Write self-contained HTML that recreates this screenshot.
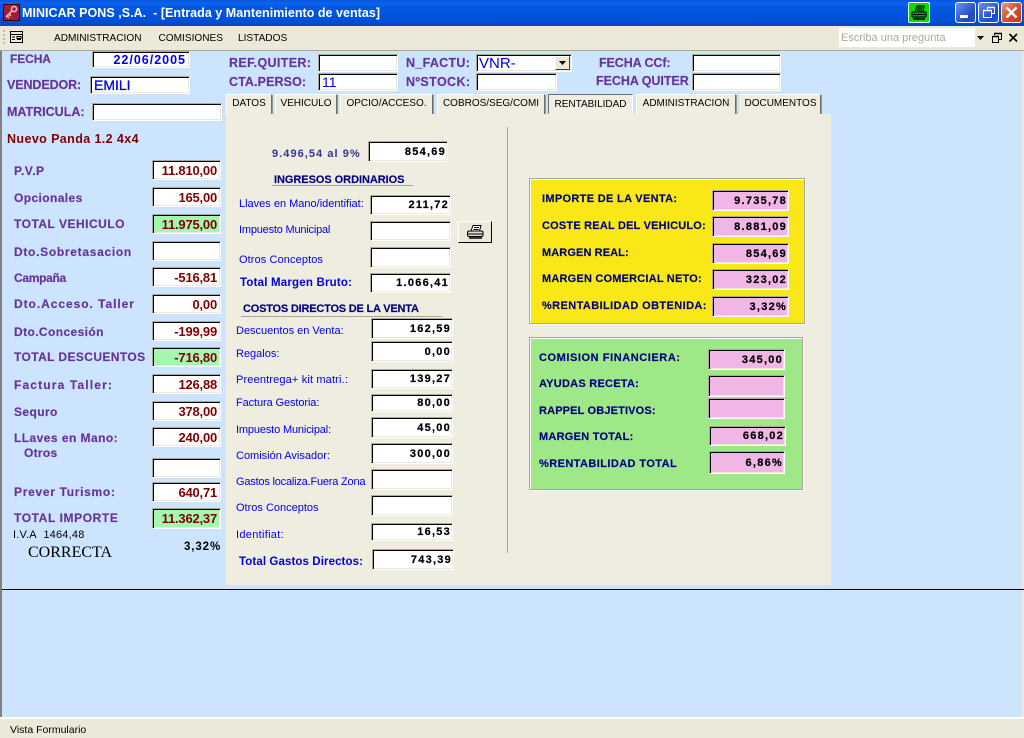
<!DOCTYPE html>
<html><head><meta charset="utf-8"><style>
html,body{margin:0;padding:0}
body{width:1024px;height:738px;overflow:hidden;position:relative;background:#cde4ff;font-family:"Liberation Sans",sans-serif}
div,svg{position:absolute}
.l{height:16px;line-height:16px;white-space:nowrap}
.p{color:#663399;font-weight:bold;font-size:12px;letter-spacing:.7px;-webkit-text-stroke:.15px #663399}
.b{color:#0000ee;font-size:11px}
.bb{color:#0000dd;font-size:11.5px;font-weight:bold}
.n{color:#000080;font-weight:bold;font-size:11px;letter-spacing:.32px;-webkit-text-stroke:.15px #000080}
.f{box-sizing:border-box;background:#fff;border:1px solid;border-color:#aca899 #fff #fff #aca899;box-shadow:inset 1px 1px 0 #000,inset -1px -1px 0 #ece9d8;display:flex;align-items:center;justify-content:flex-end;padding-right:3px;font-weight:bold;white-space:nowrap}
.r{color:#800000;font-size:13px;letter-spacing:-.2px}
.g{background:#a3f7b0}
.k{color:#000;font-size:11px;letter-spacing:1.25px;padding-right:1px;-webkit-text-stroke:.2px #000}
.m{background:#efb6e6}
.t{box-sizing:border-box;top:94px;height:21px;background:#eeeddf;border:1px solid;border-color:#fff #716f64 #716f64 #fff;box-shadow:1px 1px 0 #9d9a8b;font-size:10px;text-align:center;line-height:18px;color:#000;white-space:nowrap}
.w{font-size:10.1px;color:#000;white-space:nowrap}
</style></head><body>
<!-- title bar -->
<div style="left:0;top:0;width:1024px;height:26px;background:linear-gradient(#0a55d8 0,#0a62f0 3px,#0458e0 8px,#0050d8 20px,#0148c0 26px)"></div>
<div style="left:3px;top:4px;width:15px;height:15px;background:#9c1c3c;border:1px solid #400"></div>
<svg style="left:4px;top:5px" width="14" height="14" viewBox="0 0 14 14"><circle cx="10" cy="4" r="2.6" fill="none" stroke="#f3b0b0" stroke-width="1.6"/><path d="M8 6 L2 12 M3 11 L5 13 M5 9 L7 11" stroke="#f3b0b0" stroke-width="1.6" fill="none"/></svg>
<div class="l" style="left:22px;top:5px;color:#fff;font-weight:bold;font-size:12.5px;letter-spacing:.03px">MINICAR PONS ,S.A.&nbsp; - [Entrada y Mantenimiento de ventas]</div>
<div style="left:908px;top:2px;width:22px;height:21px;box-sizing:border-box;background:#00e000;border:1px solid #fff;border-radius:2px"></div>
<svg style="left:910px;top:4px" width="18" height="17" viewBox="0 0 18 17" fill="none" stroke="#000" stroke-width="1.3"><path d="M5 8 L7 2 H14 L13 8"/><path d="M7.5 4 H12.5 M7 6 H12"/><rect x="2" y="8" width="14" height="5" rx="1"/><path d="M3 15 H15 M3 10.5 H15" stroke-width="1.5"/></svg>
<div style="left:955px;top:2px;width:21px;height:21px;box-sizing:border-box;background:linear-gradient(135deg,#6d92ee,#1f48c8 70%,#2a55d8);border:1px solid #fff;border-radius:3px"></div>
<div style="left:960px;top:15px;width:8px;height:3px;background:#fff"></div>
<div style="left:978px;top:2px;width:21px;height:21px;box-sizing:border-box;background:linear-gradient(135deg,#6d92ee,#1f48c8 70%,#2a55d8);border:1px solid #fff;border-radius:3px"></div>
<svg style="left:982px;top:6px" width="14" height="13" fill="none" stroke="#fff"><path d="M5.5 3.5 V1.5 H12.5 V7.5 H10" stroke-width="1"/><rect x="1.5" y="4.5" width="8" height="7"/><path d="M5 1.5 H13 M1 4.5 H10" stroke-width="1.6"/></svg>
<div style="left:1001px;top:2px;width:21px;height:21px;box-sizing:border-box;background:linear-gradient(135deg,#eb9a80,#d8502c 50%,#c23a1c);border:1px solid #fff;border-radius:3px"></div>
<svg style="left:1004px;top:5px" width="15" height="15" stroke="#fff" stroke-width="2.4"><path d="M2.5 2.5 L12.5 12.5 M12.5 2.5 L2.5 12.5"/></svg>
<!-- menu bar -->
<div style="left:0;top:26px;width:1024px;height:24px;background:#ece9d8"></div>
<div style="left:0;top:50px;width:1024px;height:1px;background:#aca899"></div>
<div style="left:3px;top:30px;width:2px;height:14px;background:repeating-linear-gradient(#c1bdaa 0 2px,transparent 2px 4px)"></div>
<svg style="left:10px;top:31px" width="13" height="12" fill="none" stroke="#000"><rect x=".5" y=".5" width="12" height="11"/><path d="M.5 3.5 H12.5 M2 6 H5 M2 8.5 H5 M7 5.5 H11 V7.5 H7 Z M7 8.5 H11"/></svg>
<div class="l w" style="left:54px;top:31px">ADMINISTRACION</div>
<div class="l w" style="left:158.5px;top:31px">COMISIONES</div>
<div class="l w" style="left:238px;top:31px">LISTADOS</div>
<div style="left:839px;top:28px;width:147px;height:19px;background:#fff"></div>
<div class="l" style="left:841px;top:30px;font-size:11px;color:#aca899">Escriba una pregunta</div>
<div style="left:975px;top:28px;width:11px;height:19px;background:#ece9d8"></div>
<svg style="left:977px;top:36px" width="8" height="4"><path d="M0 0 H7 L3.5 4 Z" fill="#000"/></svg>
<svg style="left:991px;top:32px" width="12" height="12" fill="none" stroke="#000"><path d="M3.5 3 V1.5 H10.5 V7.5 H8"/><rect x="1.5" y="4.5" width="6" height="6"/><path d="M1 4.5 H8 M3 1.5 H11" stroke-width="1.5"/></svg>
<svg style="left:1008px;top:33px" width="11" height="10" stroke="#000" stroke-width="1.6"><path d="M1.5 1 L9 8.5 M9 1 L1.5 8.5"/></svg>
<!-- form frame -->
<div style="left:0;top:51px;width:2px;height:666px;background:#808080"></div>
<div style="left:1022px;top:51px;width:2px;height:666px;background:#ece9d8"></div>
<div style="left:2px;top:589px;width:1022px;height:1px;background:#000"></div>
<div style="left:0;top:717px;width:1024px;height:21px;background:#ece9d8;border-top:2px solid #fff;box-sizing:border-box"></div>
<div class="l" style="left:10px;top:722px;font-size:10.5px;color:#000">Vista Formulario</div>
<!-- header fields -->
<div class="l p" style="left:10px;top:51px;letter-spacing:-.1px">FECHA</div>
<div class="f" style="left:92px;top:51px;width:98px;height:17px;color:#0000ee;font-size:12.5px;letter-spacing:1px">22/06/2005</div>
<div class="l p" style="left:7px;top:77px;font-size:12.5px;letter-spacing:-.1px">VENDEDOR:</div>
<div class="f" style="left:90px;top:76px;width:100px;height:18px;color:#0000ee;font-size:14px;font-weight:normal;justify-content:flex-start;padding-left:3px;-webkit-text-stroke:.3px #0000ee">EMILI</div>
<div class="l p" style="left:7px;top:104px;font-size:12.5px;letter-spacing:0">MATRICULA:</div>
<div class="f" style="left:92px;top:103px;width:130px;height:18px"></div>
<div class="l p" style="left:229px;top:55px;font-size:12.5px;letter-spacing:.35px">REF.QUITER:</div>
<div class="f" style="left:318px;top:54px;width:80px;height:18px"></div>
<div class="l p" style="left:229px;top:74px;font-size:12.5px;letter-spacing:.1px">CTA.PERSO:</div>
<div class="f" style="left:318px;top:73px;width:80px;height:18px;color:#0000ee;font-size:14px;font-weight:normal;justify-content:flex-start;padding-left:3px">11</div>
<div class="l p" style="left:406px;top:55px;font-size:12.5px;letter-spacing:.3px">N_FACTU:</div>
<div class="f" style="left:476px;top:54px;width:96px;height:18px;color:#0000ee;font-size:15px;font-weight:normal;justify-content:flex-start;padding-left:2px">VNR-</div>
<div style="left:555px;top:56px;width:15px;height:14px;box-sizing:border-box;background:#ece9d8;border:1px solid;border-color:#fff #404040 #404040 #fff"></div>
<svg style="left:559px;top:61px" width="7" height="4"><path d="M0 0 H7 L3.5 4 Z" fill="#000"/></svg>
<div class="l p" style="left:406px;top:74px;font-size:12.5px;letter-spacing:.4px">NºSTOCK:</div>
<div class="f" style="left:476px;top:73px;width:81px;height:18px"></div>
<div class="l p" style="left:599px;top:55px;font-size:12.5px;letter-spacing:-.1px">FECHA CCf:</div>
<div class="f" style="left:692px;top:54px;width:89px;height:18px"></div>
<div class="l p" style="left:596px;top:73px;font-size:12.5px;letter-spacing:-.05px">FECHA QUITER</div>
<div class="f" style="left:692px;top:73px;width:89px;height:18px"></div>
<div class="l" style="left:7px;top:131px;color:#800000;font-weight:bold;font-size:12.5px;letter-spacing:.4px">Nuevo Panda 1.2 4x4</div>
<!-- left column -->
<div class="l p" style="left:14px;top:163px;letter-spacing:.5px">P.V.P</div><div class="f r" style="left:152px;top:160px;width:69px;height:20px">11.810,00</div>
<div class="l p" style="left:14px;top:190px;letter-spacing:.4px">Opcionales</div><div class="f r" style="left:152px;top:187px;width:69px;height:20px">165,00</div>
<div class="l p" style="left:14px;top:216px;letter-spacing:.5px">TOTAL VEHICULO</div><div class="f r g" style="left:152px;top:214px;width:69px;height:20px">11.975,00</div>
<div class="l p" style="left:14px;top:244px">Dto.Sobretasacion</div><div class="f r" style="left:152px;top:241px;width:69px;height:20px"></div>
<div class="l p" style="left:14px;top:270px;letter-spacing:-.3px">Campaña</div><div class="f r" style="left:152px;top:267px;width:69px;height:20px">-516,81</div>
<div class="l p" style="left:14px;top:296px;letter-spacing:.95px">Dto.Acceso. Taller</div><div class="f r" style="left:152px;top:294px;width:69px;height:20px">0,00</div>
<div class="l p" style="left:14px;top:324px;letter-spacing:.4px">Dto.Concesión</div><div class="f r" style="left:152px;top:321px;width:69px;height:20px">-199,99</div>
<div class="l p" style="left:14px;top:349px;letter-spacing:.4px">TOTAL DESCUENTOS</div><div class="f r g" style="left:152px;top:347px;width:69px;height:20px">-716,80</div>
<div class="l p" style="left:14px;top:377px;letter-spacing:1.15px">Factura Taller:</div><div class="f r" style="left:152px;top:374px;width:69px;height:20px">126,88</div>
<div class="l p" style="left:14px;top:404px;letter-spacing:.4px">Sequro</div><div class="f r" style="left:152px;top:401px;width:69px;height:20px">378,00</div>
<div class="l p" style="left:14px;top:430px;letter-spacing:.45px">LLaves en Mano:</div><div class="f r" style="left:152px;top:427px;width:69px;height:20px">240,00</div>
<div class="l p" style="left:24px;top:445px;letter-spacing:.3px">Otros</div><div class="f r" style="left:152px;top:458px;width:69px;height:20px"></div>
<div class="l p" style="left:14px;top:484px">Prever Turismo:</div><div class="f r" style="left:152px;top:482px;width:69px;height:20px">640,71</div>
<div class="l p" style="left:14px;top:510px;letter-spacing:.6px">TOTAL IMPORTE</div><div class="f r g" style="left:152px;top:508px;width:69px;height:21px">11.362,37</div>
<div class="l" style="left:13px;top:527px;font-size:11px;letter-spacing:.2px;color:#000">I.V.A&nbsp; 1464,48</div>
<div class="l" style="left:28px;top:545px;font-family:'Liberation Serif',serif;font-size:16px;color:#000">CORRECTA</div>
<div class="l" style="left:184px;top:539px;font-size:11.5px;font-weight:bold;color:#000;letter-spacing:.9px">3,32%</div>
<!-- tabs -->
<div class="t" style="left:226px;width:46px">DATOS</div>
<div class="t" style="left:275px;width:62px">VEHICULO</div>
<div class="t" style="left:340px;width:93px">OPCIO/ACCESO.</div>
<div class="t" style="left:437px;width:108px">COBROS/SEG/COMI</div>
<div class="t" style="left:636px;width:100px">ADMINISTRACION</div>
<div class="t" style="left:740px;width:81px">DOCUMENTOS</div>
<div style="left:226px;top:114px;width:605px;height:471px;background:#eeeddf"></div>
<div class="t" style="left:548px;width:85px;height:20px;border-color:#716f64 #fff #eeeddf #716f64;box-shadow:none;line-height:20px;background:repeating-conic-gradient(#ece9d8 0 25%,#f6f4ec 0 50%) 0 0/2px 2px">RENTABILIDAD</div>
<div style="left:507px;top:127px;width:1px;height:426px;background:#a8a699"></div>
<!-- middle column -->
<div class="l" style="left:272px;top:146px;color:#333399;font-weight:bold;font-size:11px;letter-spacing:1.05px">9.496,54 al 9%</div>
<div class="f k" style="left:368px;top:141px;width:80px;height:21px">854,69</div>
<div class="l n" style="left:274px;top:172px;letter-spacing:-.05px">INGRESOS ORDINARIOS</div>
<div style="left:272px;top:185px;width:141px;height:1px;background:#a8a699"></div>
<div class="l b" style="left:239px;top:196px">Llaves en Mano/identifiat:</div><div class="f k" style="left:370px;top:195px;width:81px;height:20px">211,72</div>
<div class="l b" style="left:239px;top:222px;letter-spacing:-.2px">Impuesto Municipal</div><div class="f k" style="left:370px;top:221px;width:81px;height:20px"></div>
<div class="l b" style="left:239px;top:252px;letter-spacing:.1px">Otros Conceptos</div><div class="f k" style="left:370px;top:247px;width:81px;height:21px"></div>
<div class="l bb" style="left:240px;top:275px;letter-spacing:.2px">Total Margen Bruto:</div><div class="f k" style="left:370px;top:273px;width:81px;height:20px">1.066,41</div>
<div style="left:458px;top:221px;width:34px;height:22px;box-sizing:border-box;background:#ece9d8;border:1px solid;border-color:#fff #000 #000 #fff"></div>
<svg style="left:467px;top:224px" width="17" height="16" viewBox="0 0 17 16" fill="none" stroke="#000"><path d="M4 7 L6 1.5 H14 L12.5 7" fill="#fff"/><path d="M7 3.5 H12 M6.5 5.5 H11.5"/><rect x=".5" y="7" width="15.5" height="5.5" rx="1.5" fill="#ddd"/><path d="M1 10 H16" /><path d="M2 14 H15" stroke-width="1.5"/></svg>
<div class="l n" style="left:243px;top:301px;letter-spacing:-.2px">COSTOS DIRECTOS DE LA VENTA</div>
<div style="left:241px;top:316px;width:201px;height:1px;background:#a8a699"></div>
<div class="l b" style="left:236px;top:323px">Descuentos en Venta:</div><div class="f k" style="left:371px;top:318px;width:82px;height:21px">162,59</div>
<div class="l b" style="left:236px;top:346px">Regalos:</div><div class="f k" style="left:371px;top:341px;width:82px;height:21px">0,00</div>
<div class="l b" style="left:236px;top:372px;letter-spacing:.15px">Preentrega+ kit matri.:</div><div class="f k" style="left:371px;top:369px;width:82px;height:20px">139,27</div>
<div class="l b" style="left:236px;top:395px;letter-spacing:-.1px">Factura Gestoria:</div><div class="f k" style="left:371px;top:394px;width:82px;height:18px">80,00</div>
<div class="l b" style="left:236px;top:422px;letter-spacing:-.15px">Impuesto Municipal:</div><div class="f k" style="left:371px;top:417px;width:82px;height:21px">45,00</div>
<div class="l b" style="left:236px;top:448px">Comisión Avisador:</div><div class="f k" style="left:371px;top:443px;width:82px;height:21px">300,00</div>
<div class="l b" style="left:236px;top:474px;letter-spacing:-.2px">Gastos localiza.Fuera Zona</div><div class="f k" style="left:371px;top:469px;width:82px;height:21px"></div>
<div class="l b" style="left:236px;top:500px">Otros Conceptos</div><div class="f k" style="left:371px;top:495px;width:82px;height:21px"></div>
<div class="l b" style="left:236px;top:527px;letter-spacing:.3px">Identifiat:</div><div class="f k" style="left:371px;top:523px;width:82px;height:18px">16,53</div>
<div class="l bb" style="left:239px;top:554px;letter-spacing:.1px">Total Gastos Directos:</div><div class="f k" style="left:372px;top:549px;width:82px;height:21px">743,39</div>
<!-- yellow -->
<div style="left:529px;top:178px;width:277px;height:147px;box-sizing:border-box;background:#f9e816;border:1px solid;border-color:#aca899 #fff #fff #aca899;box-shadow:inset -1px -1px 0 #aca899,inset 1px 1px 0 #fff"></div>
<div class="l n" style="left:542px;top:191px">IMPORTE DE LA VENTA:</div><div class="f k m" style="left:712px;top:190px;width:77px;height:21px">9.735,78</div>
<div class="l n" style="left:542px;top:218px;letter-spacing:.2px">COSTE REAL DEL VEHICULO:</div><div class="f k m" style="left:712px;top:216px;width:77px;height:21px">8.881,09</div>
<div class="l n" style="left:542px;top:245px;letter-spacing:.1px">MARGEN REAL:</div><div class="f k m" style="left:712px;top:243px;width:77px;height:21px">854,69</div>
<div class="l n" style="left:542px;top:271px;letter-spacing:.2px">MARGEN COMERCIAL NETO:</div><div class="f k m" style="left:712px;top:269px;width:77px;height:21px">323,02</div>
<div class="l n" style="left:542px;top:298px;letter-spacing:.4px">%RENTABILIDAD OBTENIDA:</div><div class="f k m" style="left:712px;top:296px;width:77px;height:21px">3,32%</div>
<!-- green -->
<div style="left:529px;top:337px;width:275px;height:154px;box-sizing:border-box;background:#9fe888;border:1px solid;border-color:#aca899 #fff #fff #aca899;box-shadow:inset -1px -1px 0 #aca899,inset 1px 1px 0 #fff"></div>
<div class="l n" style="left:539px;top:350px;letter-spacing:.57px">COMISION FINANCIERA:</div><div class="f k m" style="left:708px;top:349px;width:77px;height:21px">345,00</div>
<div class="l n" style="left:539px;top:376px;letter-spacing:.25px">AYUDAS RECETA:</div><div class="f k m" style="left:708px;top:375px;width:77px;height:22px"></div>
<div class="l n" style="left:539px;top:403px;letter-spacing:.15px">RAPPEL OBJETIVOS:</div><div class="f k m" style="left:708px;top:398px;width:77px;height:21px"></div>
<div class="l n" style="left:539px;top:429px;letter-spacing:.25px">MARGEN TOTAL:</div><div class="f k m" style="left:709px;top:426px;width:77px;height:20px">668,02</div>
<div class="l n" style="left:539px;top:456px;letter-spacing:.42px">%RENTABILIDAD TOTAL</div><div class="f k m" style="left:709px;top:451px;width:76px;height:23px">6,86%</div>
</body></html>
